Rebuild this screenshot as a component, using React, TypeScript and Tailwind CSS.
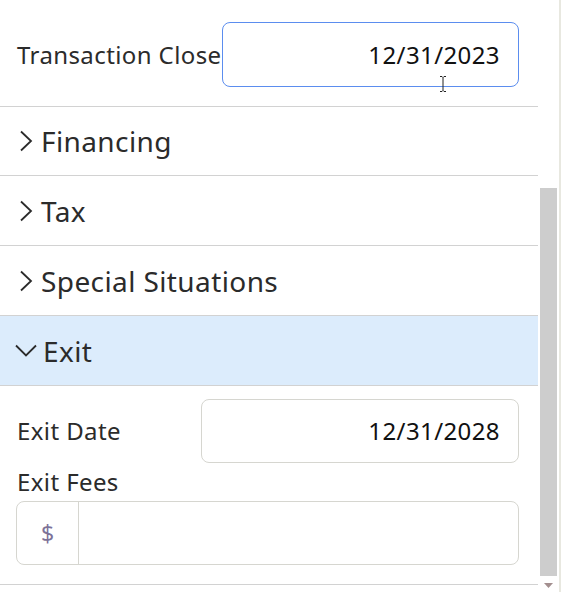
import React from "react";

const font = { fontFamily: '"Noto Sans", "Liberation Sans", sans-serif' };

const ChevronRight = () => (
  <svg width="14" height="22" viewBox="0 0 14 22" fill="none" className="shrink-0">
    <path d="M2 1.5 L12 11 L2 20.5" stroke="#2b2b2b" strokeWidth="1.8" />
  </svg>
);

const ChevronDown = () => (
  <svg width="22" height="13" viewBox="0 0 22 13" fill="none" className="shrink-0">
    <path d="M1 1.5 L11 11.5 L21 1.5" stroke="#2b2b2b" strokeWidth="1.8" />
  </svg>
);

const Section: React.FC<{ title: string; h?: string }> = ({ title, h = "h-[70px]" }) => (
  <div className={`${h} flex items-center border-b border-[#d2d2d2] pl-[19px]`}>
    <ChevronRight />
    <span className="ml-[8px] text-[28px] leading-none tracking-[0.4px] text-[#2b2b2b]">{title}</span>
  </div>
);

export default function App() {
  return (
    <div className="flex h-[592px] w-[584px] overflow-hidden bg-white" style={font}>
      <div className="w-[538px] shrink-0">
        {/* Transaction close */}
        <div className="relative flex h-[107px] items-start border-b border-[#d2d2d2] pl-[17px] pr-[19px] pt-[22px]">
          <span className="flex h-[65px] items-center whitespace-nowrap text-[24px] tracking-[0.4px] text-[#2b2b2b]">Transaction Close</span>
          <div className="flex h-[65px] flex-1 items-center justify-end rounded-[8px] border border-[#5b8def] pr-[18px] text-[24px] tracking-[0.4px] text-[#111]">
            12/31/2023
          </div>
          <svg width="8" height="16" viewBox="0 0 8 16" className="absolute left-[439px] top-[76px]">
            <path d="M1 0.5 H3 L4 1.5 L5 0.5 H7 M4 1.5 V14.5 M1 15.5 H3 L4 14.5 L5 15.5 H7" stroke="#222" strokeWidth="1" fill="none" />
          </svg>
        </div>

        <Section title="Financing" h="h-[69px]" />
        <Section title="Tax" />
        <Section title="Special Situations" />

        {/* Exit (open) */}
        <div className="flex h-[70px] items-center border-b border-[#d2d2d2] bg-[#dcecfc] pl-[15px]">
          <ChevronDown />
          <span className="ml-[6px] text-[28px] leading-none tracking-[0.4px] text-[#2b2b2b]">Exit</span>
        </div>
        <div className="border-b border-[#d2d2d2] pb-[19px] pl-[16px] pr-[19px] pt-[13px]">
          <div className="flex items-center">
            <span className="w-[185px] pl-[1px] text-[24px] tracking-[0.4px] text-[#2b2b2b]">Exit Date</span>
            <div className="flex h-[64px] flex-1 items-center justify-end rounded-[8px] border border-[#d6d6d0] pr-[18px] text-[24px] tracking-[0.4px] text-[#111]">
              12/31/2028
            </div>
          </div>
          <div className="flex h-[38px] items-center pl-[1px] text-[24px] tracking-[0.4px] text-[#2b2b2b]">Exit Fees</div>
          <div className="flex h-[64px] rounded-[8px] border border-[#d6d6d0]">
            <div className="flex w-[62px] items-center justify-center border-r border-[#d6d6d0] text-[23px] text-[#7d7298]">$</div>
            <div className="flex-1" />
          </div>
        </div>
      </div>

      {/* scrollbar */}
      <div className="flex w-[21px] shrink-0 flex-col">
        <div className="ml-[2px] mt-[188px] h-[388px] w-[17px] bg-[#cdcdcd]" />
        <svg width="17" height="8" viewBox="0 0 17 8" className="ml-[2px] mt-[7px]">
          <path d="M4 0 H13 L8.5 5 Z" fill="#a38f8f" />
        </svg>
      </div>
      <div className="w-[2px] shrink-0 bg-[#e8e8e0]" />
      <div className="flex-1" />
    </div>
  );
}
